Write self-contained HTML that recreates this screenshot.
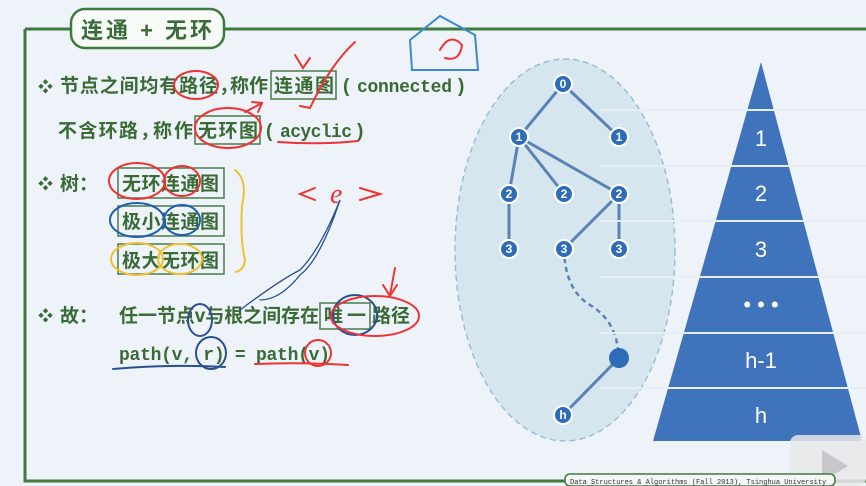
<!DOCTYPE html>
<html><head><meta charset="utf-8"><style>
body{margin:0;width:866px;height:486px;overflow:hidden;background:#eef3f9;font-family:"Liberation Sans","Noto Sans CJK SC",sans-serif;}
svg{position:absolute;left:0;top:0}
</style></head><body>
<svg width="866" height="486" viewBox="0 0 866 486" xmlns="http://www.w3.org/2000/svg">
<rect width="866" height="486" fill="#eef3f9"/>
<path d="M25 29 H866 M25 29 V481 H866" stroke="#3f7a3f" stroke-width="3" fill="none"/>
<rect x="71" y="9" width="153" height="39" rx="14" fill="#f7fbf7" stroke="#3f7a3f" stroke-width="2.5"/>
<text x="81" y="38" textLength="131" font-family="Liberation Sans,Noto Sans CJK SC,sans-serif" font-size="22" font-weight="bold" fill="#3a6a3a">连通 + 无环</text>
<g font-family="Liberation Sans,Noto Sans CJK SC,sans-serif" font-size="19" font-weight="bold" fill="#3a6a36">
<text x="38" y="92" font-size="15">❖</text>
<text x="60" y="92" textLength="158">节点之间均有路径</text>
<text x="219" y="92">，</text>
<text x="230" y="92" textLength="38">称作</text>
<text x="274" y="92" textLength="60">连通图</text>
<text x="343" y="92">(</text>
<text x="357" y="92" textLength="95" font-family="Liberation Mono,monospace" font-size="18">connected</text>
<text x="458" y="92">)</text>
<text x="58" y="137" textLength="80">不含环路</text>
<text x="140" y="137">，</text>
<text x="153" y="137" textLength="40">称作</text>
<text x="198" y="137" textLength="60">无环图</text>
<text x="266" y="137">(</text>
<text x="280" y="137" textLength="72" font-family="Liberation Mono,monospace" font-size="18">acyclic</text>
<text x="357" y="137">)</text>
<text x="38" y="189" font-size="15">❖</text>
<text x="60" y="190">树：</text>
<text x="122" y="190" textLength="97">无环连通图</text>
<text x="122" y="228" textLength="97">极小连通图</text>
<text x="122" y="267" textLength="97">极大无环图</text>
<text x="38" y="321" font-size="15">❖</text>
<text x="60" y="322">故：</text>
<text x="119" y="322" textLength="200">任一节点v与根之间存在</text>
<text x="324" y="322" textLength="42">唯一</text>
<text x="372" y="322" textLength="38">路径</text>
<text x="119" y="360" textLength="211" font-family="Liberation Mono,monospace" font-size="18">path(v, r) = path(v)</text>
</g>
<g fill="none" stroke="#4a7a4a" stroke-width="1.5">
<rect x="271" y="71" width="65" height="28"/><rect x="195" y="116" width="65" height="28"/>
<rect x="118" y="168" width="106" height="30"/><rect x="118" y="206" width="106" height="30"/><rect x="118" y="244" width="106" height="30"/>
<rect x="320" y="303" width="50" height="26"/>
</g>
<g fill="none" stroke-width="2" stroke-linecap="round">
<ellipse cx="196" cy="85" rx="22" ry="14" stroke="#e33"/>
<ellipse cx="228" cy="128" rx="33" ry="20" stroke="#e33"/>
<path d="M278 142 Q320 145 358 141" stroke="#e33"/>
<path d="M300 106 L310 108 Q330 65 355 42 M295 55 L303 68 L310 58" stroke="#e33"/>
<path d="M245 112 L262 103 M252 102 L262 103 L258 112" stroke="#e33"/>
<ellipse cx="137" cy="181" rx="28" ry="18" stroke="#e33"/><ellipse cx="182" cy="181" rx="18" ry="15" stroke="#e33"/>
<ellipse cx="137" cy="220" rx="27" ry="17" stroke="#2060b0"/><ellipse cx="182" cy="220" rx="18" ry="15" stroke="#2060b0"/>
<ellipse cx="137" cy="259" rx="26" ry="16" stroke="#f0c030"/><ellipse cx="180" cy="259" rx="22" ry="15" stroke="#f0c030"/>
<path d="M235 170 Q248 180 242 205 Q240 240 245 260 Q244 270 236 272" stroke="#f0c030"/>
<path d="M315 188 L300 194 L315 200 M360 188 L380 194 L360 200" stroke="#e33"/>
<text x="330" y="203" font-size="28" fill="#e33" stroke="none" font-family="Liberation Serif,serif" font-style="italic">e</text>
<path d="M410 40 L440 16 L475 35 L478 70 L412 70 Z" stroke="#3a8ad0"/>
<path d="M440 50 Q450 32 462 45 Q460 62 445 58" stroke="#e33"/>
<path d="M240 310 Q280 280 300 270 Q320 250 340 200 Q320 260 300 275 Q280 300 260 300" stroke="#2a5090" stroke-width="1.3"/>
<ellipse cx="200" cy="320" rx="12" ry="16" stroke="#2a5090"/><ellipse cx="211" cy="353" rx="15" ry="16" stroke="#2a5090"/>
<ellipse cx="355" cy="315" rx="22" ry="20" stroke="#2a5090"/>
<ellipse cx="375" cy="316" rx="44" ry="20" stroke="#e33"/>
<path d="M395 268 L390 295 M383 285 L390 296 L397 285" stroke="#e33"/>
<path d="M113 369 Q170 364 225 367" stroke="#2a5090"/>
<path d="M255 364 Q300 362 348 365" stroke="#e33"/>
<ellipse cx="318" cy="353" rx="13" ry="13" stroke="#e33"/>
</g>
<ellipse cx="565" cy="250" rx="110" ry="191" fill="#d5e6ee" stroke="#9ac0d0" stroke-width="1.5" stroke-dasharray="6 4"/>
<g stroke="#5a82b4" stroke-width="3" fill="none">
<path d="M563 84 L519 137 M563 84 L619 137 M519 137 L509 194 M519 137 L564 194 M519 137 L619 194 M509 194 L509 249 M619 194 L564 249 M619 194 L619 249 M619 358 L563 415"/>
<path d="M564 249 Q565 290 590 305 Q615 320 618 350" stroke-dasharray="5 4" stroke-width="2.5"/>
</g>
<g fill="#2f6cb8" stroke="#fff" stroke-width="2">
<circle cx="563" cy="84" r="9"/><circle cx="519" cy="137" r="9"/><circle cx="619" cy="137" r="9"/>
<circle cx="509" cy="194" r="9"/><circle cx="564" cy="194" r="9"/><circle cx="619" cy="194" r="9"/>
<circle cx="509" cy="249" r="9"/><circle cx="564" cy="249" r="9"/><circle cx="619" cy="249" r="9"/>
<circle cx="619" cy="358" r="10" stroke="none"/><circle cx="563" cy="415" r="9"/>
</g>
<g fill="#fff" font-size="12" font-weight="bold" text-anchor="middle" font-family="Liberation Sans,sans-serif">
<text x="563" y="88">0</text><text x="519" y="141">1</text><text x="619" y="141">1</text>
<text x="509" y="198">2</text><text x="564" y="198">2</text><text x="619" y="198">2</text>
<text x="509" y="253">3</text><text x="564" y="253">3</text><text x="619" y="253">3</text><text x="563" y="419">h</text>
</g>
<polygon points="761,62 862,441 653,441" fill="#3f73bb"/>
<g stroke="#e8eef6" stroke-width="2"><path d="M600 110 H900 M600 166 H900 M600 221 H900 M600 277 H900 M600 333 H900 M600 388 H900"/></g>
<g fill="#fff" font-size="22" text-anchor="middle" font-family="Liberation Sans,sans-serif">
<text x="761" y="146">1</text><text x="761" y="201">2</text><text x="761" y="257">3</text><text x="761" y="312">• • •</text><text x="761" y="368">h-1</text><text x="761" y="423">h</text>
</g>
<rect x="790" y="435" width="76" height="51" rx="8" fill="#e8e8ea" opacity="0.85"/>
<polygon points="822,450 848,466 822,482" fill="#c8c8cc"/>
<rect x="565" y="474" width="270" height="12" rx="5" fill="#f4f8f4" stroke="#3f7a3f" stroke-width="1.5"/>
<text x="570" y="484" font-size="7" font-family="Liberation Mono,monospace" fill="#333">Data Structures &amp; Algorithms (Fall 2013), Tsinghua University</text>
</svg>
</body></html>
